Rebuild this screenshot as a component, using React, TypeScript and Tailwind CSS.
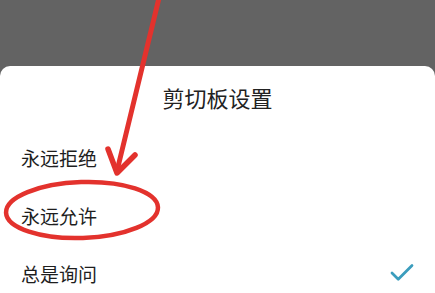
import { Check } from 'lucide-react';

const options = [
  { label: '永远拒绝', checked: false },
  { label: '永远允许', checked: false },
  { label: '总是询问', checked: true },
];

export default function App() {
  return (
    <div
      className="relative w-[435px] h-[293px] overflow-hidden bg-[#636363]"
      style={{ fontFamily: '"Noto Sans CJK SC", "Noto Sans", sans-serif' }}
    >
      <div className="h-[66px]" />

      {/* Bottom sheet */}
      <div className="bg-white rounded-t-[10px] h-[240px]">
        <div className="h-[62px] flex items-center justify-center">
          <h1 className="text-[22px] leading-none text-[#222]">剪切板设置</h1>
        </div>
        {options.map((o) => (
          <div key={o.label} className="h-[58px] flex items-center justify-between pl-[21px] pr-[18px]">
            <span className="text-[19px] leading-none text-[#1e1e1e]">{o.label}</span>
            {o.checked && <Check className="w-[30px] h-[30px] text-[#3b9dbd]" strokeWidth={2.2} />}
          </div>
        ))}
      </div>

      {/* Annotation */}
      <svg className="absolute inset-0 pointer-events-none" width="435" height="293" viewBox="0 0 435 293">
        <g stroke="#e3322d" fill="none" strokeLinecap="round" strokeLinejoin="round">
          <path d="M159 -2 L117 171" strokeWidth="5" />
          <path d="M108 149 L117 173 L135 155" strokeWidth="5.5" />
          <ellipse cx="82" cy="210" rx="76" ry="28" strokeWidth="4.5" transform="rotate(-2 82 210)" />
        </g>
      </svg>
    </div>
  );
}
